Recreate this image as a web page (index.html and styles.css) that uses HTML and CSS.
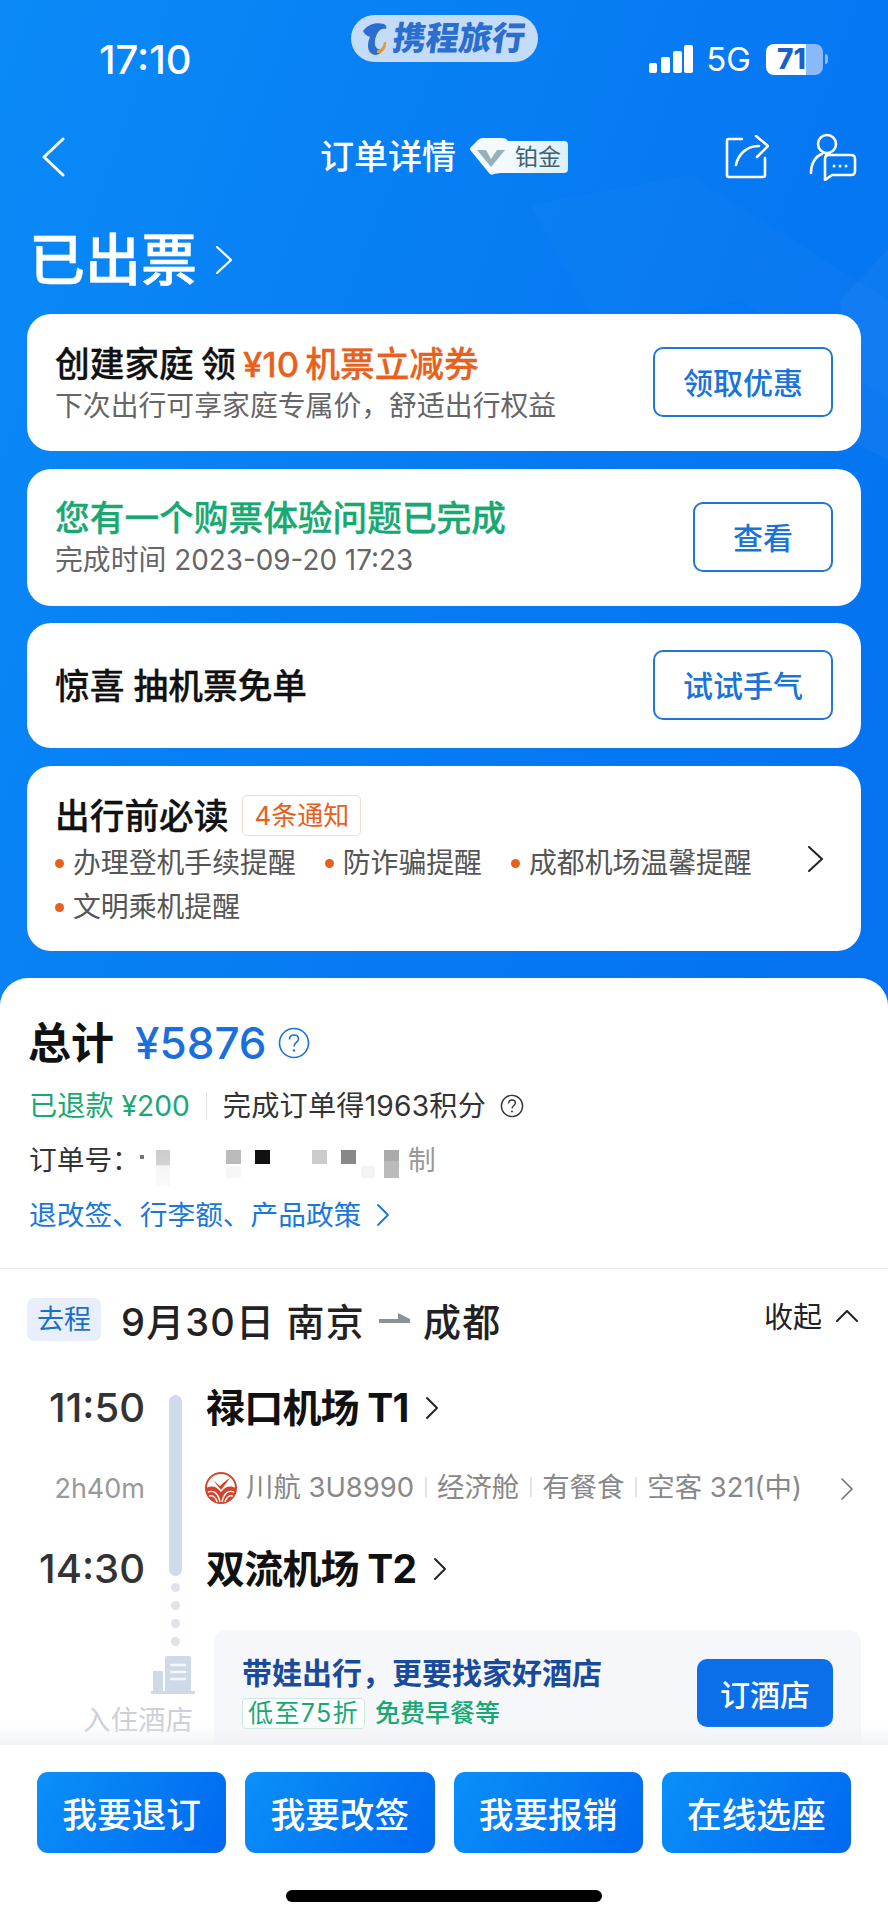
FILE: index.html
```html
<!DOCTYPE html>
<html lang="zh-CN">
<head>
<meta charset="utf-8">
<title>订单详情</title>
<link rel="stylesheet" href="styles.css">
</head>
<body>
<div class="app">
  <div class="scroll">
    <svg class="deco" width="888" height="520" viewBox="0 0 888 520"><path d="M530 205 L690 175 L888 300 L888 400 L740 300 L600 330Z" fill="#fff" opacity=".02"/><path d="M840 300 L888 250 L888 460 L850 440Z" fill="#fff" opacity=".035"/></svg>
    <header class="status">
      <div class="time">17:10</div>
      <div class="pill">
        <svg class="dolphin" width="26" height="34" viewBox="0 0 26 34"><path d="M1 9 C6 2 14 0 22 2 C24 3 25 5 24 7 C20 6 17 8 15 12 C12 18 12 25 16 27 C18 28 20 27 21 24 C22 29 18 33 13 33 C6 32 4 24 8 15 C5 14 2 12 1 9Z" fill="#2a6fd0"/><path d="M15 28 C18 29 21 26 22 20 L24 20 C25 27 20 32 15 31Z" fill="#eb9a2e"/></svg>
        <span class="pill-text">携程旅行</span>
      </div>
      <div class="status-right">
        <svg width="44" height="28" viewBox="0 0 44 28"><rect x="0" y="18" width="8" height="10" rx="2" fill="#fff"/><rect x="12" y="12" width="9" height="16" rx="2" fill="#fff"/><rect x="24" y="6" width="9" height="22" rx="2" fill="#fff"/><rect x="35" y="0" width="9" height="28" rx="2" fill="#fff"/></svg>
        <span class="net">5G</span>
        <div class="battery">71</div>
        <div class="battery-tip"></div>
      </div>
    </header>

    <nav class="nav">
      <svg class="nav-back" width="24" height="40" viewBox="0 0 24 40"><path d="M22 2 L3 20 L22 38" fill="none" stroke="#fff" stroke-width="3" stroke-linecap="round" stroke-linejoin="round"/></svg>
      <div class="nav-title">订单详情</div>
      <div class="vip">
        <span class="vip-text">铂金</span>
        <svg class="vip-v" width="56" height="38" viewBox="0 0 56 38"><path d="M1 13 Q-1 11 1 9 L8 2 Q10 0 13 0 H32 Q36 0 38 3 H44 V35 H30 L24 36 Q21 38 19 35Z" fill="#f2fafd"/><path d="M7 12 H16 L21 21 L27 12 H35 L21 29Z" fill="#97b1ba"/></svg>
      </div>
      <svg class="nav-share" width="44" height="44" viewBox="0 0 44 44"><path d="M17 4 H4 Q2 4 2 6 V40 Q2 42 4 42 H38 Q40 42 40 40 V23" fill="none" stroke="#fff" stroke-width="2.6" stroke-linecap="round"/><path d="M11 30 C13 20 21 11 34 11 M31 1 L43 11 L32 22" fill="none" stroke="#fff" stroke-width="2.6" stroke-linecap="round" stroke-linejoin="round"/></svg>
      <svg class="nav-help" width="48" height="48" viewBox="0 0 48 48"><circle cx="18" cy="11" r="9" fill="none" stroke="#fff" stroke-width="2.6"/><path d="M2 40 C2 30 7 23 13 21" fill="none" stroke="#fff" stroke-width="2.6" stroke-linecap="round"/><path d="M17 22 H42 Q46 22 46 26 V38 Q46 42 42 42 H23 L16 47 V26 Q16 22 20 22Z" fill="none" stroke="#fff" stroke-width="2.6" stroke-linejoin="round"/><circle cx="25" cy="33" r="1.5" fill="#fff"/><circle cx="31" cy="33" r="1.5" fill="#fff"/><circle cx="37" cy="33" r="1.5" fill="#fff"/></svg>
    </nav>

    <div class="headline">
      <h1>已出票</h1>
      <svg width="18" height="28" viewBox="0 0 18 28"><path d="M2 1 L16 14 L2 27" fill="none" stroke="#fff" stroke-width="2.2" stroke-linecap="round" stroke-linejoin="round"/></svg>
    </div>

    <section class="cards">
      <div class="card card-tall">
        <div class="card-body">
          <div class="card-title card-title-promo">创建家庭 领 <span class="orange">¥10 机票立减券</span></div>
          <div class="card-sub">下次出行可享家庭专属价，舒适出行权益</div>
        </div>
        <button class="outline">领取优惠</button>
      </div>
      <div class="card card-tall">
        <div class="card-body">
          <div class="card-title green">您有一个购票体验问题已完成</div>
          <div class="card-sub">完成时间 2023-09-20 17:23</div>
        </div>
        <button class="outline outline-short">查看</button>
      </div>
      <div class="card card-mid">
        <div class="card-body">
          <div class="card-title">惊喜 抽机票免单</div>
        </div>
        <button class="outline">试试手气</button>
      </div>
      <div class="card card-notice">
        <div class="notice-main">
          <div class="notice-head">
            <span class="card-title">出行前必读</span>
            <span class="notice-tag">4条通知</span>
          </div>
          <div class="notice-list">
            <span class="notice-item">办理登机手续提醒</span>
            <span class="notice-item">防诈骗提醒</span>
            <span class="notice-item">成都机场温馨提醒</span>
            <span class="notice-item">文明乘机提醒</span>
          </div>
        </div>
        <svg class="notice-chev" width="17" height="26" viewBox="0 0 17 26"><path d="M2 1 L15 13 L2 25" fill="none" stroke="#222" stroke-width="2" stroke-linecap="round" stroke-linejoin="round"/></svg>
      </div>
    </section>

    <main class="sheet">
      <section class="summary">
        <div class="total-row">
          <span class="total-label">总计</span>
          <span class="total-price">¥5876</span>
          <svg width="32" height="32" viewBox="0 0 32 32"><circle cx="16" cy="16" r="14.5" fill="none" stroke="#1a73d8" stroke-width="1.6"/><path d="M11.5 12.5 C11.5 9.5 13.5 8 16 8 C18.5 8 20.5 9.5 20.5 12 C20.5 15.5 16 15.5 16 19.5" fill="none" stroke="#1a73d8" stroke-width="1.6"/><circle cx="16" cy="23.5" r="1.2" fill="#1a73d8"/></svg>
        </div>
        <div class="refund-row">
          <span class="refund">已退款 ¥200</span>
          <span class="refund-sep"></span>
          <span class="points">完成订单得1963积分</span>
          <svg width="24" height="24" viewBox="0 0 24 24"><circle cx="12" cy="12" r="10.6" fill="none" stroke="#333" stroke-width="1.4"/><path d="M8.6 9.5 C8.6 7.2 10 6 12 6 C14 6 15.4 7.2 15.4 9 C15.4 11.5 12 11.5 12 14.5" fill="none" stroke="#333" stroke-width="1.4"/><circle cx="12" cy="17.6" r="1" fill="#333"/></svg>
        </div>
        <div class="order-row">
          <span>订单号：</span><span class="order-copy">制</span>
          <div class="mosaic">
            <i class="m m0"></i><i class="m m1"></i><i class="m m2"></i><i class="m m3"></i><i class="m m4"></i><i class="m m5"></i><i class="m m6"></i><i class="m m7"></i><i class="m m8"></i><i class="m m9"></i>
          </div>
        </div>
        <div class="policy-row">
          <span>退改签、行李额、产品政策</span>
          <svg width="14" height="24" viewBox="0 0 14 24"><path d="M2 2 L12 12 L2 22" fill="none" stroke="#1a78d8" stroke-width="1.8" stroke-linecap="round" stroke-linejoin="round"/></svg>
        </div>
      </section>

      <section class="trip">
        <div class="trip-head">
          <span class="trip-tag">去程</span>
          <span class="trip-title">9月30日 南京</span>
          <svg class="trip-arrow" width="31" height="14" viewBox="0 0 31 14"><path d="M0 7 H19 V1 L31 7 V11 H0Z" fill="#8d9299"/></svg>
          <span class="trip-title">成都</span>
          <span class="trip-collapse">收起</span>
          <svg width="22" height="13" viewBox="0 0 22 13"><path d="M1 12 L11 2 L21 12" fill="none" stroke="#222" stroke-width="2" stroke-linecap="round" stroke-linejoin="round"/></svg>
        </div>

        <div class="timeline">
          <div class="rail">
            <div class="rail-bar"></div>
            <i class="rail-dot"></i><i class="rail-dot"></i><i class="rail-dot"></i><i class="rail-dot"></i>
          </div>
          <div class="tl-row tl-airport">
            <div class="tl-time">11:50</div>
            <div class="tl-name">禄口机场 T1</div>
            <svg class="chev-s" width="14" height="24" viewBox="0 0 14 24"><path d="M2 2 L12 12 L2 22" fill="none" stroke="#222" stroke-width="1.9" stroke-linecap="round" stroke-linejoin="round"/></svg>
          </div>
          <div class="tl-row tl-flight">
            <div class="tl-dur">2h40m</div>
            <svg class="airline" width="32" height="34" viewBox="0 0 32 34"><circle cx="16" cy="17" r="15" fill="#fff" stroke="#d0452e" stroke-width="2"/><path d="M1.5 17 C8 14 12 16 16 21 C20 16 24 14 30.500 17 C30 26 24 32 16 32 C8 32 2 26 1.500 17Z" fill="#d0452e"/><path d="M3 21 C9 19 13 22 15 31 M29 21 C23 19 19 22 17 31 M4 25 C8 24 11 27 12 31 M28 25 C24 24 21 27 20 31" fill="none" stroke="#fff" stroke-width="1.4"/><path d="M8 9 L15 15 C18 12 21 9 25 7 L16 19Z" fill="#d0452e"/></svg>
            <span class="fl">川航 3U8990</span><i class="fl-sep"></i>
            <span class="fl">经济舱</span><i class="fl-sep"></i>
            <span class="fl">有餐食</span><i class="fl-sep"></i>
            <span class="fl">空客 321(中)</span>
            <svg class="fl-chev" width="14" height="24" viewBox="0 0 14 24"><path d="M2 2 L12 12 L2 22" fill="none" stroke="#777" stroke-width="1.7" stroke-linecap="round" stroke-linejoin="round"/></svg>
          </div>
          <div class="tl-row tl-airport">
            <div class="tl-time">14:30</div>
            <div class="tl-name">双流机场 T2</div>
            <svg class="chev-s" width="14" height="24" viewBox="0 0 14 24"><path d="M2 2 L12 12 L2 22" fill="none" stroke="#222" stroke-width="1.9" stroke-linecap="round" stroke-linejoin="round"/></svg>
          </div>
        </div>

        <div class="hotel">
          <div class="hotel-side">
            <svg width="44" height="38" viewBox="0 0 44 38"><rect x="2" y="15" width="10" height="20" fill="#cfd9e8"/><path d="M14 2 Q14 0 16 0 H38 Q40 0 40 2 V35 H14Z" fill="#cfd9e8"/><path d="M19 9 H35 M19 16 H35 M19 23 H35" stroke="#f4f6fa" stroke-width="2.4"/><rect x="0" y="35" width="44" height="3" fill="#cfd9e8"/></svg>
            <div class="hotel-label">入住酒店</div>
          </div>
          <div class="promo">
            <div class="promo-text">
              <div class="promo-title">带娃出行，更要找家好酒店</div>
              <div class="promo-tags">
                <span class="promo-tag">低至75折</span>
                <span class="promo-free">免费早餐等</span>
              </div>
            </div>
            <button class="promo-btn">订酒店</button>
          </div>
        </div>
      </section>
    </main>
    <div class="fade"></div>
  </div>

  <footer class="footer">
    <div class="actions">
      <button class="action">我要退订</button>
      <button class="action">我要改签</button>
      <button class="action">我要报销</button>
      <button class="action">在线选座</button>
    </div>
    <div class="home"></div>
  </footer>
</div>
</body>
</html>
```
FILE: styles.css
```css
* { box-sizing: border-box; }
html, body { margin: 0; padding: 0; }
body { font-family: "Inter", "Noto Sans CJK SC", "Noto Sans", sans-serif; color: #111; }
i { display: block; }
button { font-family: inherit; cursor: pointer; }

.app { width: 888px; height: 1920px; display: flex; flex-direction: column; overflow: hidden; background: #fff; }
.scroll { position: relative; height: 1745px; overflow: hidden; background: linear-gradient(110deg, #0a8af7 0%, #0679f3 50%, #056eee 100%); }
.deco { position: absolute; left: 0; top: 0; pointer-events: none; }

.status { position: relative; height: 110px; display: flex; justify-content: space-between; padding: 15px 0 0 99px; }
.time { margin-top: 21px; font-size: 40px; line-height: 48px; font-weight: 500; color: #fff; }
.pill { position: absolute; left: 351px; top: 15px; width: 187px; height: 47px; border-radius: 24px; background: #c4dcf8; display: flex; align-items: center; padding-left: 11px; gap: 5px; }
.pill-text { display: inline-block; transform: skewX(-8deg); font-size: 33px; line-height: 47px; font-weight: 900; color: #2a6fd0; white-space: nowrap; }
.status-right { display: flex; align-items: center; height: 32px; margin-top: 28px; padding-right: 60px; }
.net { margin-left: 13px; font-size: 33px; line-height: 32px; color: #fff; font-weight: 400; }
.battery { margin-left: 15px; width: 57px; height: 31px; padding-left: 11px; border-radius: 8px; background: linear-gradient(90deg, #fff 40px, #8ab8f8 40px); color: #1a5fd0; font-size: 28px; line-height: 31px; font-weight: 800; }
.battery-tip { width: 3px; height: 10px; margin-left: 2px; border-radius: 0 3px 3px 0; background: #8ab8f8; }

.nav { height: 94px; display: flex; align-items: center; padding-left: 41px; }
.nav-back { margin-right: 255px; }
.nav-title { font-size: 34px; line-height: 44px; font-weight: 500; color: #fff; white-space: nowrap; }
.vip { position: relative; margin-left: 14px; width: 98px; height: 32px; display: flex; justify-content: flex-end; }
.vip-v { position: absolute; left: 0; top: -3px; }
.vip-text { width: 70px; height: 32px; padding-right: 7px; border-radius: 4px; background: linear-gradient(90deg, #f4fbfe, #dcf0f8); font-size: 23px; line-height: 32px; color: #3c6070; text-align: right; }
.nav-share { margin-left: 157px; }
.nav-help { margin-left: 40px; }

.headline { height: 110px; display: flex; align-items: center; padding: 2px 0 0 29px; gap: 18px; }
h1 { margin: 0; font-size: 56px; line-height: 70px; font-weight: 500; color: #fff; -webkit-text-stroke: .5px #fff; }

.cards { position: relative; display: flex; flex-direction: column; gap: 17.7px; padding: 0 27px; }
.card { background: #fff; border-radius: 24px; display: flex; align-items: center; justify-content: space-between; padding: 0 28px; }
.card-tall { height: 137px; }
.card-mid { height: 125px; }
.card-notice { height: 185px; padding: 0 37px 0 28px; align-items: flex-start; }
.card-body { display: flex; flex-direction: column; gap: 0; }
.card-title { font-size: 34.7px; line-height: 46px; font-weight: 500; color: #111; white-space: nowrap; -webkit-text-stroke: .3px currentColor; }
.card-title-promo { word-spacing: -2px; }
.card-sub { font-size: 27.85px; line-height: 38px; color: #666; white-space: nowrap; }
.orange { color: #e8601c; word-spacing: -3px; }
.card-title.green, .green { color: #18a872; }
.outline { width: 180px; height: 70px; margin-top: -1px; padding: 0 0 2px; border: 2px solid #1f78d8; border-radius: 10px; background: #fff; color: #1a73d8; font-size: 30px; font-weight: 500; }
.outline-short { width: 140px; }

.notice-main { flex: none; width: 740px; }
.notice-head { display: flex; align-items: center; gap: 14px; margin-top: 29px; height: 41px; }
.notice-tag { height: 41px; padding: 0 11px; border: 1px solid #f5dcc4; border-radius: 5px; font-size: 26px; line-height: 39px; color: #e8601c; white-space: nowrap; }
.notice-list { display: flex; flex-wrap: wrap; margin-top: 5px; column-gap: 29px; }
.notice-item { position: relative; padding-left: 18px; font-size: 27.85px; line-height: 44px; color: #555; white-space: nowrap; }
.notice-item::before { content: ""; position: absolute; left: 0; top: 18px; width: 9px; height: 9px; border-radius: 50%; background: #e8601c; }
.notice-chev { margin-top: 80px; }

.sheet { position: relative; margin-top: 27px; height: 790px; background: #fff; border-radius: 28px 28px 0 0; }
.summary { height: 291px; padding: 40px 0 0 29px; border-bottom: 1px solid #e8e8e8; }
.total-row { display: flex; align-items: center; height: 50px; }
.total-label { margin-left: -1px; font-size: 43px; line-height: 50px; font-weight: 700; color: #111; }
.total-price { margin-left: 21px; font-size: 44px; line-height: 50px; font-weight: 500; color: #1a6fdc; }
.total-row svg { margin-left: 11px; }
.refund-row { display: flex; align-items: center; height: 40px; margin-top: 18px; font-size: 28.2px; line-height: 40px; white-space: nowrap; }
.refund { color: #18a872; }
.refund-sep { width: 1px; height: 28px; margin: 0 16px; background: #e2e2e2; }
.points { color: #333; letter-spacing: .2px; }
.refund-row svg { margin-left: 14px; }
.order-row { position: relative; display: flex; height: 40px; margin-top: 14px; font-size: 27.7px; line-height: 40px; color: #333; white-space: nowrap; }
.order-copy { position: absolute; left: 379px; color: #999; }
.mosaic { position: absolute; left: 0; top: 0; width: 420px; height: 44px; }
.m { position: absolute; }
.m0 { left: 111px; top: 15px; width: 4px; height: 4px; background: #777; }
.m1 { left: 127px; top: 10px; width: 14px; height: 36px; background: linear-gradient(180deg, #cdcdcd 0, #d2d2d2 40%, #f6f6f6 45%, #fafafa 100%); }
.m2 { left: 197px; top: 10px; width: 15px; height: 14px; background: #bbb; }
.m3 { left: 226px; top: 10px; width: 15px; height: 14px; background: #111; }
.m4 { left: 283px; top: 10px; width: 15px; height: 14px; background: #ccc; }
.m5 { left: 312px; top: 10px; width: 15px; height: 14px; background: #888; }
.m6 { left: 355px; top: 10px; width: 15px; height: 14px; background: #aaa; }
.m7 { left: 355px; top: 21px; width: 15px; height: 17px; background: #bbb; }
.m8 { left: 197px; top: 26px; width: 15px; height: 12px; background: #f7f7f7; }
.m9 { left: 332px; top: 26px; width: 14px; height: 12px; background: #f4f4f4; }
.policy-row { display: flex; align-items: center; gap: 15px; height: 40px; margin-top: 15px; font-size: 27.7px; line-height: 40px; color: #1a78d8; white-space: nowrap; }

.trip { padding: 28px 27px 0 27px; }
.trip-head { display: flex; align-items: center; height: 44px; }
.trip-tag { width: 74px; height: 43px; border-radius: 7px; background: #e8effa; color: #1a6fc8; font-size: 27px; line-height: 43px; text-align: center; }
.trip-title { font-size: 38px; line-height: 44px; font-weight: 500; letter-spacing: 1.2px; color: #222; white-space: nowrap; margin-top: 5px; }
.trip-head .trip-title:nth-child(2) { margin-left: 20px; }
.trip-arrow { margin: 0 13px 0 14px; }
.trip-collapse { margin-left: auto; margin-top: -8px; font-size: 29px; color: #222; }
.trip-head svg:last-child { margin: -8px 3px 0 14px; }

.timeline { position: relative; margin-top: 42px; }
.rail { position: absolute; left: 142px; top: 12px; width: 13px; display: flex; flex-direction: column; align-items: center; gap: 9px; }
.rail-bar { width: 13px; height: 181px; border-radius: 7px; background: #cfdbea; margin-bottom: -2px; }
.rail-dot { width: 9px; height: 9px; border-radius: 50%; background: #dde3ec; }
.tl-row { display: flex; align-items: center; }
.tl-airport { height: 50px; }
.tl-flight { height: 111px; padding-top: 6px; position: relative; }
.tl-time { width: 118px; text-align: right; font-size: 40px; line-height: 50px; font-weight: 500; color: #333; white-space: nowrap; }
.tl-name { margin-left: 61px; font-size: 39px; line-height: 50px; font-weight: 700; color: #111; white-space: nowrap; letter-spacing: -.8px; }
.chev-s { margin-left: 17px; }
.tl-dur { width: 118px; text-align: right; font-size: 27px; color: #999; margin-top: -6px; }
.airline { margin-left: 60px; margin-top: -8px; }
.fl { font-size: 27.4px; line-height: 38px; color: #888; white-space: nowrap; margin-top: -10px; }
.airline + .fl { margin-left: 9px; }
.fl-sep { width: 2px; height: 20px; margin: -10px 10px 0 11px; background: #e4e4e4; }
.fl-chev { margin-left: auto; margin-right: 7px; margin-top: -6px; }

.hotel { position: relative; display: flex; margin-top: 36px; }
.hotel-side { width: 187px; display: flex; flex-direction: column; align-items: flex-end; padding: 26px 21px 0 0; }
.hotel-side svg { margin-right: -2px; }
.hotel-label { margin-top: 7px; font-size: 27.5px; line-height: 38px; color: #ccd0d8; white-space: nowrap; }
.promo { flex: 1; height: 130px; border-radius: 12px 12px 0 0; background: #f5f7fb; display: flex; justify-content: space-between; padding: 29px 28px 0 28px; }
.promo-title { font-size: 30px; line-height: 28px; font-weight: 700; color: #1a4a9a; white-space: nowrap; }
.promo-tags { display: flex; align-items: center; gap: 10px; margin-top: 11px; }
.promo-tag { height: 31px; padding: 0 5px; border: 1px solid #cdeadd; border-radius: 4px; font-size: 25px; line-height: 28px; letter-spacing: 1.4px; color: #18a872; background: #fff; white-space: nowrap; }
.promo-free { font-size: 25px; line-height: 31px; font-weight: 500; color: #18a872; white-space: nowrap; }
.promo-btn { width: 136px; height: 68px; border: 0; border-radius: 10px; background: #0a6fe8; color: #fff; font-size: 30px; font-weight: 500; padding: 0; }

.fade { position: absolute; left: 0; right: 0; bottom: 0; height: 20px; background: linear-gradient(180deg, rgba(255,255,255,0), rgba(238,240,243,.8)); pointer-events: none; }

.footer { flex: 1; background: #fff; padding: 27px 37px 0; display: flex; flex-direction: column; }
.actions { display: grid; grid-template-columns: repeat(4, 1fr); column-gap: 19px; }
.action { height: 81px; border: 0; border-radius: 11px; background: linear-gradient(120deg, #0a90f8, #0068f0); color: #fff; font-size: 34.7px; font-weight: 500; padding: 0; }
.home { align-self: center; margin-top: 37px; width: 316px; height: 12px; border-radius: 6px; background: #000; }
```
